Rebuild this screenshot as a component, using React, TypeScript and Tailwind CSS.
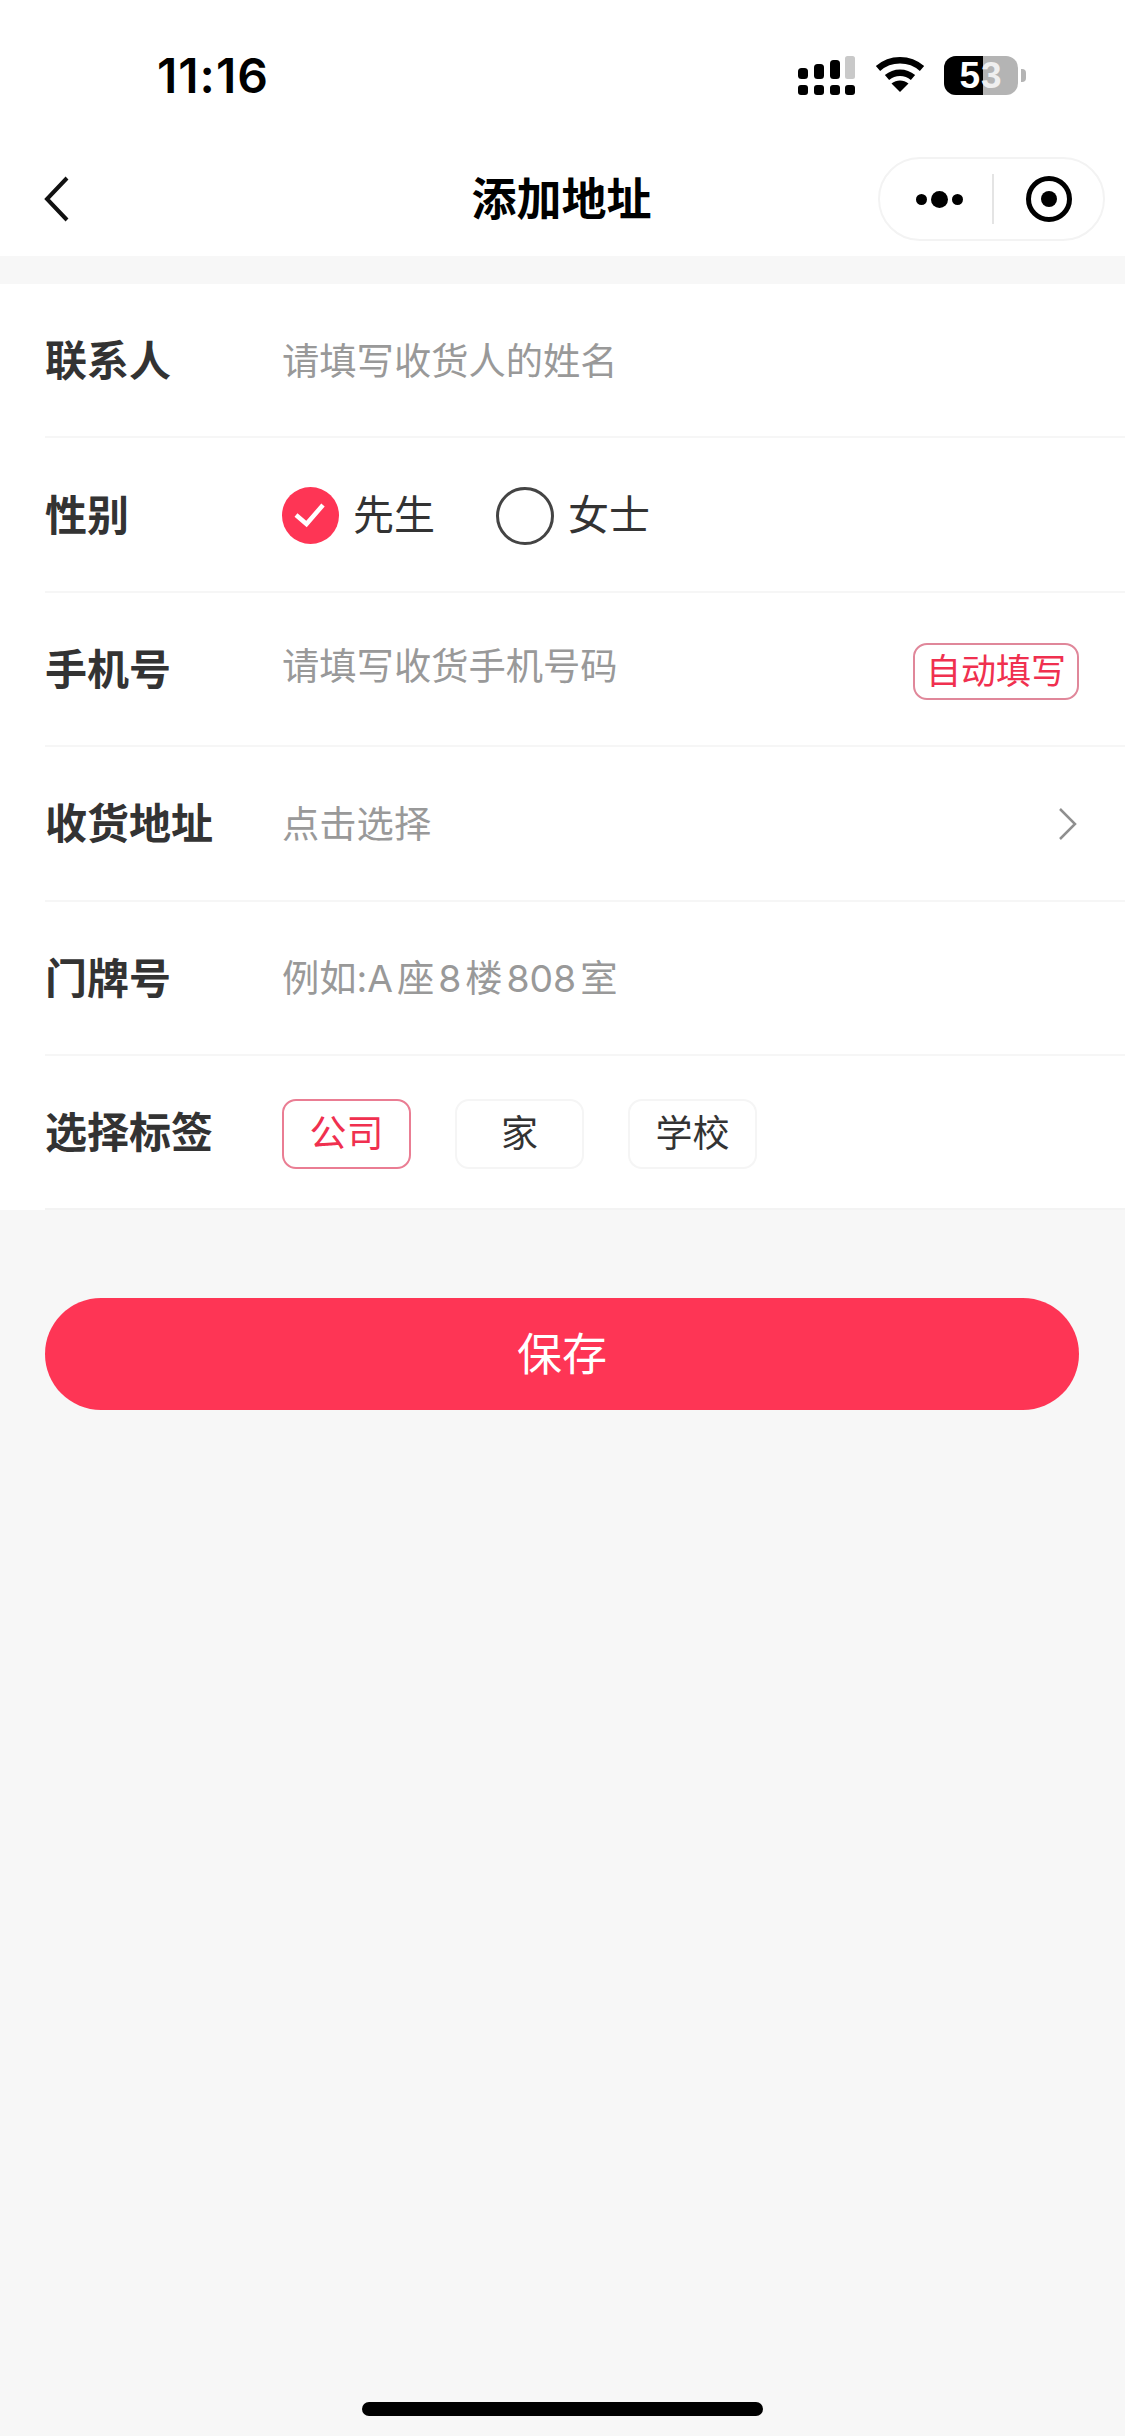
import React from "react";

const FONT = "font-['Inter','Noto_Sans_CJK_SC','Liberation_Sans',sans-serif]";

function Signal() {
  return (
    <svg width="58" height="40" viewBox="0 0 58 40" className="block">
      <rect x="0" y="12" width="10" height="11" rx="3.5" fill="#000" />
      <rect x="16" y="8" width="10" height="15" rx="3.5" fill="#000" />
      <rect x="32" y="4" width="10" height="19" rx="3.5" fill="#000" />
      <rect x="47" y="0" width="10" height="23" rx="2.5" fill="#c9c9c9" />
      <rect x="0" y="29" width="10" height="10" rx="3" fill="#000" />
      <rect x="16" y="29" width="10" height="10" rx="3" fill="#000" />
      <rect x="32" y="29" width="10" height="10" rx="3" fill="#000" />
      <rect x="47" y="29" width="10" height="10" rx="3" fill="#000" />
    </svg>
  );
}

function Wifi() {
  return (
    <svg width="50" height="36" viewBox="0 0 50 36" className="block">
      <path d="M3 12.5 C15.5 1.5 34.5 1.5 47 12.5" fill="none" stroke="#000" strokeWidth="6.5" />
      <path d="M12 21.5 C19.5 15 30.5 15 38 21.5" fill="none" stroke="#000" strokeWidth="6.5" />
      <path d="M16.5 27.5 C21.5 23.5 28.5 23.5 33.5 27.5 L25 36 Z" fill="#000" />
    </svg>
  );
}

function Battery() {
  return (
    <div className="flex items-center gap-[3px]">
      <div className="relative flex h-[39px] w-[74px] items-center justify-center overflow-hidden rounded-[12px] bg-[#b4b4b4]">
        <div className="absolute inset-y-0 left-0 w-[39px] bg-black" />
        <span className="relative text-[37px] leading-none font-bold tracking-[1px] text-white font-['Liberation_Sans',sans-serif]">
          5<span className="text-[#efefef]">3</span>
        </span>
      </div>
      <div className="h-[13px] w-[5px] rounded-r-[4px] bg-[#b4b4b4]" />
    </div>
  );
}

function Row({ label, children, last }: { label: string; children: React.ReactNode; last?: boolean }) {
  return (
    <div className={`ml-[45px] flex h-[154.4px] items-center border-b-2 pt-[2px] ${last ? "border-[#f3f3f3]" : "border-[#f6f6f6]"}`}>
      <div className="w-[237px] shrink-0 text-[42px] leading-none font-semibold text-[#333]">{label}</div>
      <div className="flex min-w-0 flex-1 items-center">{children}</div>
    </div>
  );
}

function Placeholder({ children }: { children: React.ReactNode }) {
  return <span className="text-[37.3px] leading-none text-[#999]">{children}</span>;
}

function Tag({ children, active }: { children: React.ReactNode; active?: boolean }) {
  return (
    <div
      className={`flex h-[70px] w-[129px] items-center justify-center rounded-[14px] border-2 text-[37px] leading-none ${
        active ? "border-[#ea7d93] text-[#f0304f]" : "border-[#f5f5f5] text-[#333]"
      }`}
    >
      {children}
    </div>
  );
}

export default function App() {
  return (
    <div className={`flex h-[2436px] w-[1125px] flex-col overflow-hidden bg-[#f7f7f7] ${FONT}`}>
      <header className="h-[256px] shrink-0 bg-white">
        <div className="flex h-[157px] items-start justify-between pt-[56px] pl-[157px] pr-[99px]">
          <span className="mt-[-2px] text-[48px] leading-[44px] font-semibold tracking-[1px] text-black">11:16</span>
          <div className="flex items-start gap-[19px]">
            <Signal />
            <Wifi />
            <Battery />
          </div>
        </div>
        <div className="grid grid-cols-[1fr_auto_1fr] items-center px-[20px]">
          <svg width="26" height="46" viewBox="0 0 26 46" className="ml-[24px] block">
            <path d="M23 2 L3 23 L23 44" fill="none" stroke="#111" strokeWidth="4" />
          </svg>
          <h1 className="mr-[2px] text-[45px] leading-none font-bold text-black">添加地址</h1>
          <div className="flex h-[84px] w-[227px] items-center justify-self-end rounded-full border-2 border-[#f3f3f3] bg-white">
            <div className="flex w-[112px] items-center justify-center gap-[4px] pl-[6px]">
              <span className="h-[11px] w-[11px] rounded-full bg-black" />
              <span className="h-[17px] w-[17px] rounded-full bg-black" />
              <span className="h-[11px] w-[11px] rounded-full bg-black" />
            </div>
            <div className="h-[50px] w-[2px] bg-[#e4e4e4]" />
            <div className="flex flex-1 items-center justify-center">
              <svg width="46" height="46" viewBox="0 0 46 46" className="block">
                <circle cx="23" cy="23" r="20.5" fill="none" stroke="#000" strokeWidth="5" />
                <circle cx="23" cy="23" r="8" fill="#000" />
              </svg>
            </div>
          </div>
        </div>
      </header>

      <main className="mt-[28px] bg-white">
        <Row label="联系人">
          <Placeholder>请填写收货人的姓名</Placeholder>
        </Row>
        <Row label="性别">
          <div className="flex items-center gap-[14px]">
            <svg width="57" height="57" viewBox="0 0 57 57" className="block">
              <circle cx="28.5" cy="28.5" r="28.5" fill="#fe3555" />
              <path d="M14 28 L24.5 37 L41 18" fill="none" stroke="#fff" strokeWidth="4.5" />
            </svg>
            <span className="text-[41px] leading-none text-[#333]">先生</span>
          </div>
          <div className="ml-[61px] flex items-center gap-[14px]">
            <div className="h-[58px] w-[58px] rounded-full border-[3px] border-[#444]" />
            <span className="text-[41px] leading-none text-[#333]">女士</span>
          </div>
        </Row>
        <Row label="手机号">
          <span className="mt-[-5px]">
            <Placeholder>请填写收货手机号码</Placeholder>
          </span>
          <div className="mt-[3px] mr-[46px] ml-auto flex h-[57px] w-[166px] items-center justify-center rounded-[14px] border-2 border-[#e0879a] text-[35px] leading-none text-[#f0304f]">
            自动填写
          </div>
        </Row>
        <Row label="收货地址">
          <Placeholder>点击选择</Placeholder>
          <svg width="20" height="34" viewBox="0 0 20 34" className="mr-[47px] ml-auto block">
            <path d="M2 2 L17 17 L2 32" fill="none" stroke="#8f8f8f" strokeWidth="2.5" />
          </svg>
        </Row>
        <Row label="门牌号">
          <Placeholder>
            例如:A<span className="text-[14px]"> </span>座<span className="text-[14px]"> </span>8<span className="text-[14px]"> </span>楼<span className="text-[14px]"> </span>808<span className="text-[14px]"> </span>室
          </Placeholder>
        </Row>
        <Row label="选择标签" last>
          <div className="mt-[1px] flex items-center gap-[44px]">
            <Tag active>公司</Tag>
            <Tag>家</Tag>
            <Tag>学校</Tag>
          </div>
        </Row>
      </main>

      <button className="mr-[46px] ml-[45px] mt-[88px] flex h-[112px] shrink-0 items-center justify-center rounded-full bg-[#fe3555] text-[45px] leading-none text-white">
        保存
      </button>

      <div className="mt-auto mb-[20px] h-[14px] w-[401px] shrink-0 self-center rounded-full bg-black" />
    </div>
  );
}
